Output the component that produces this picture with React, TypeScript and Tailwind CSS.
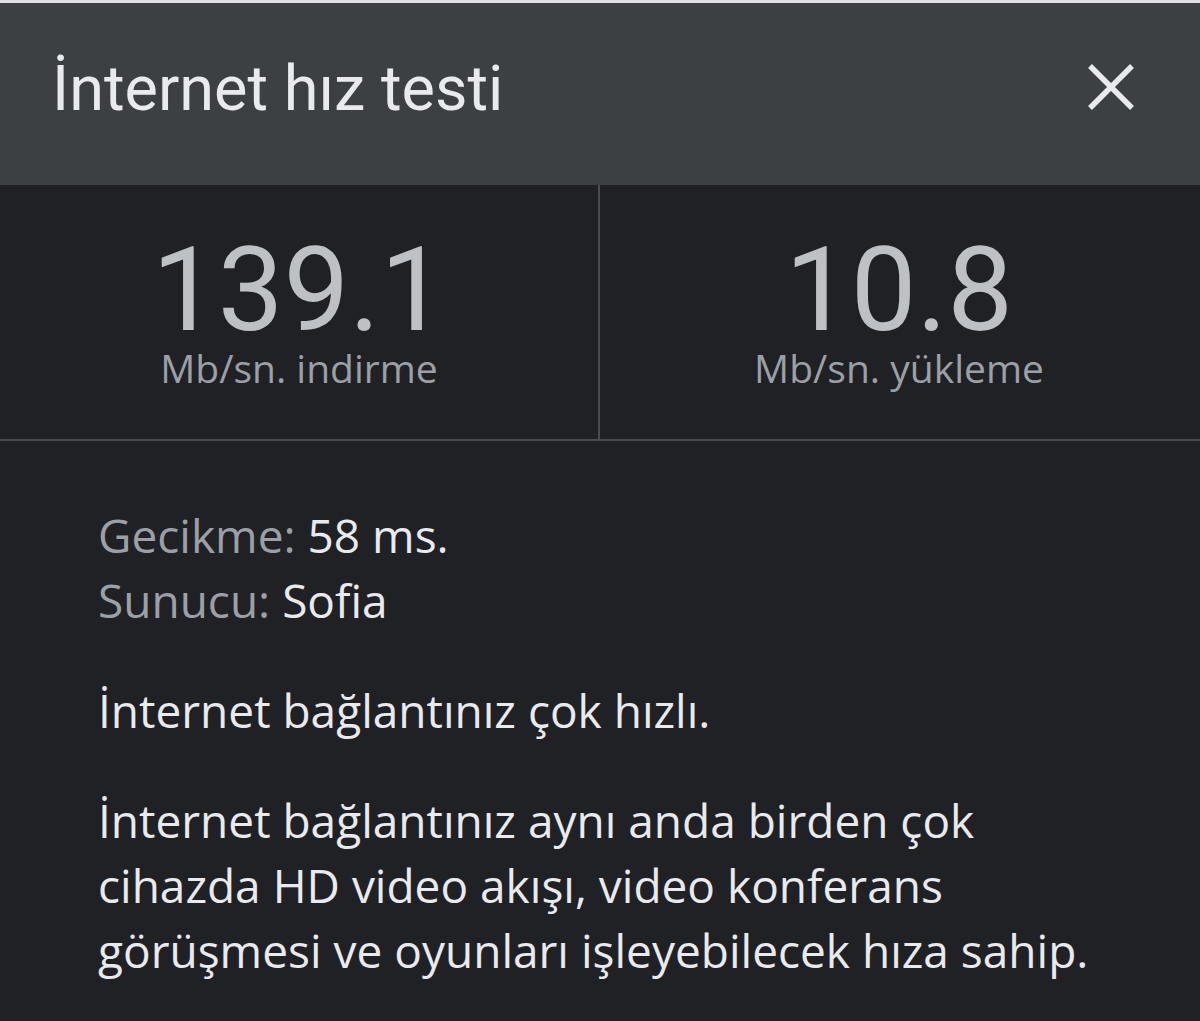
import React from "react";

export default function App() {
  return (
    <div
      className="w-[1200px] h-[1021px] overflow-hidden bg-[#202124] flex flex-col"
      style={{ fontFamily: "'Open Sans', Roboto, sans-serif" }}
    >
      <div className="h-[3px] bg-[#dfe1e5]" />
      <header className="h-[182px] shrink-0 bg-[#3c4043] flex items-start justify-between pl-[52px] pr-[65px]">
        <h1
          className="mt-[54px] text-[63px] leading-none text-[#e8eaed] font-normal"
          style={{ fontFamily: "Roboto, sans-serif" }}
        >
          İnternet hız testi
        </h1>
        <svg width="48" height="48" viewBox="0 0 48 48" className="mt-[60px] text-[#e8eaed]">
          <path d="M3 3 L45 45 M45 3 L3 45" stroke="currentColor" strokeWidth="5.5" />
        </svg>
      </header>
      <section className="h-[256px] shrink-0 grid grid-cols-2 border-b-2 border-[#4a4c50]">
        <div className="flex flex-col items-center pt-[50px] border-r-2 border-[#4a4c50]">
          <div className="text-[117px] leading-[110px] text-[#bdc1c6]" style={{ fontFamily: "Roboto, sans-serif" }}>
            139.1
          </div>
          <div className="mt-[3px] text-[39px] leading-[40px] text-[#9aa0a6]">Mb/sn. indirme</div>
        </div>
        <div className="flex flex-col items-center pt-[50px] -ml-[2px]">
          <div className="text-[117px] leading-[110px] text-[#bdc1c6]" style={{ fontFamily: "Roboto, sans-serif" }}>
            10.8
          </div>
          <div className="mt-[3px] text-[39px] leading-[40px] text-[#9aa0a6]">Mb/sn. yükleme</div>
        </div>
      </section>
      <section className="pl-[98px] pr-[72px] pt-[62px] text-[46px] leading-[65px] text-[#e8eaed]">
        <div>
          <span className="text-[#9aa0a6]">Gecikme:</span> 58 ms.
        </div>
        <div>
          <span className="text-[#9aa0a6]">Sunucu:</span> Sofia
        </div>
        <p className="mt-[45px]">İnternet bağlantınız çok hızlı.</p>
        <p className="mt-[45px]">
          İnternet bağlantınız aynı anda birden çok cihazda HD video akışı, video konferans görüşmesi ve oyunları işleyebilecek hıza sahip.
        </p>
      </section>
    </div>
  );
}
